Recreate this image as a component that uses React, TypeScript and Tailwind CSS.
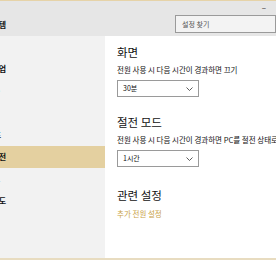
const sideItems = [
  { label: "디스플레이", tail: "w-0" },
  { label: "알림 및 작업", tail: "w-[6px]" },
  { label: "앱 및 기능", tail: "w-0" },
  { label: "멀티태스킹", tail: "w-0" },
  { label: "태블릿 모드", tail: "w-[1px]" },
  { label: "전원 및 절전", tail: "w-[6px]", selected: true },
  { label: "저장소", tail: "w-0" },
  { label: "오프라인 지도", tail: "w-[6px]" },
];

const Chevron = () => (
  <svg width="7" height="4" viewBox="0 0 7 4" className="text-[#333]">
    <path d="M0.5 0.5 L3.5 3.5 L6.5 0.5" fill="none" stroke="currentColor" strokeWidth="0.8" />
  </svg>
);

const Dropdown = ({ value }: { value: string }) => (
  <div className="mt-[5px] flex h-[17px] w-[82px] items-center justify-between border border-[#9a9a9a] bg-white pl-[5px] pr-[5px]">
    <span className="text-[7px] leading-none text-[#111]">{value}</span>
    <Chevron />
  </div>
);

export default function App() {
  return (
    <div
      className="flex h-[260px] w-[276px] flex-col overflow-hidden bg-white"
      style={{ fontFamily: '"Noto Sans CJK KR", "Noto Sans", sans-serif' }}
    >
      <div className="h-[1px] bg-[#e6d3a8]" />
      <div className="relative flex h-[35px] shrink-0 overflow-hidden bg-[#e6e6e6]">
        <div className="absolute left-0 top-[19px] flex w-[6px] justify-end">
          <span className="whitespace-nowrap text-[8px] font-bold leading-[10px] text-[#111]">시스템</span>
        </div>
        <span className="absolute right-[10px] top-[3px] text-[8px] leading-[8px] text-[#111]">–</span>
        <div className="ml-auto mt-[14px] flex h-[18px] w-[101px] items-center border border-[#9a9a9a] bg-[#f3f3f3] pl-[6px]">
          <span className="text-[7px] leading-none text-[#555]">설정 찾기</span>
        </div>
      </div>
      <div className="flex flex-1">
        <div className="flex w-[105px] shrink-0 flex-col overflow-hidden bg-[#f2f2f2]">
          {sideItems.map((item) => (
            <div
              key={item.label}
              className={`flex h-[22px] shrink-0 items-center ${item.selected ? "bg-[#e4d0a0]" : ""}`}
            >
              <div className={`flex shrink-0 justify-end ${item.tail}`}>
                <span className="whitespace-nowrap text-[8px] font-bold leading-none text-[#111]">
                  {item.label}
                </span>
              </div>
            </div>
          ))}
        </div>
        <div className="flex flex-1 flex-col pl-[12px] pt-[8px] text-[#111]">
          <h2 className="text-[11.5px] leading-[16px]">화면</h2>
          <p className="mt-[5px] whitespace-nowrap text-[7.5px] leading-[10px]">
            전원 사용 시 다음 시간이 경과하면 끄기
          </p>
          <Dropdown value="30분" />
          <h2 className="mt-[17px] text-[11.5px] leading-[16px]">절전 모드</h2>
          <p className="mt-[5px] whitespace-nowrap text-[7.5px] leading-[10px]">
            전원 사용 시 다음 시간이 경과하면 PC를 절전 상태로 전환
          </p>
          <Dropdown value="1시간" />
          <h2 className="mt-[20px] text-[11.5px] leading-[16px]">관련 설정</h2>
          <a className="mt-[6px] text-[7.5px] leading-[10px] text-[#c9a247]">추가 전원 설정</a>
        </div>
      </div>
      <div className="h-[2px] bg-[#e8dcc0]" />
    </div>
  );
}
